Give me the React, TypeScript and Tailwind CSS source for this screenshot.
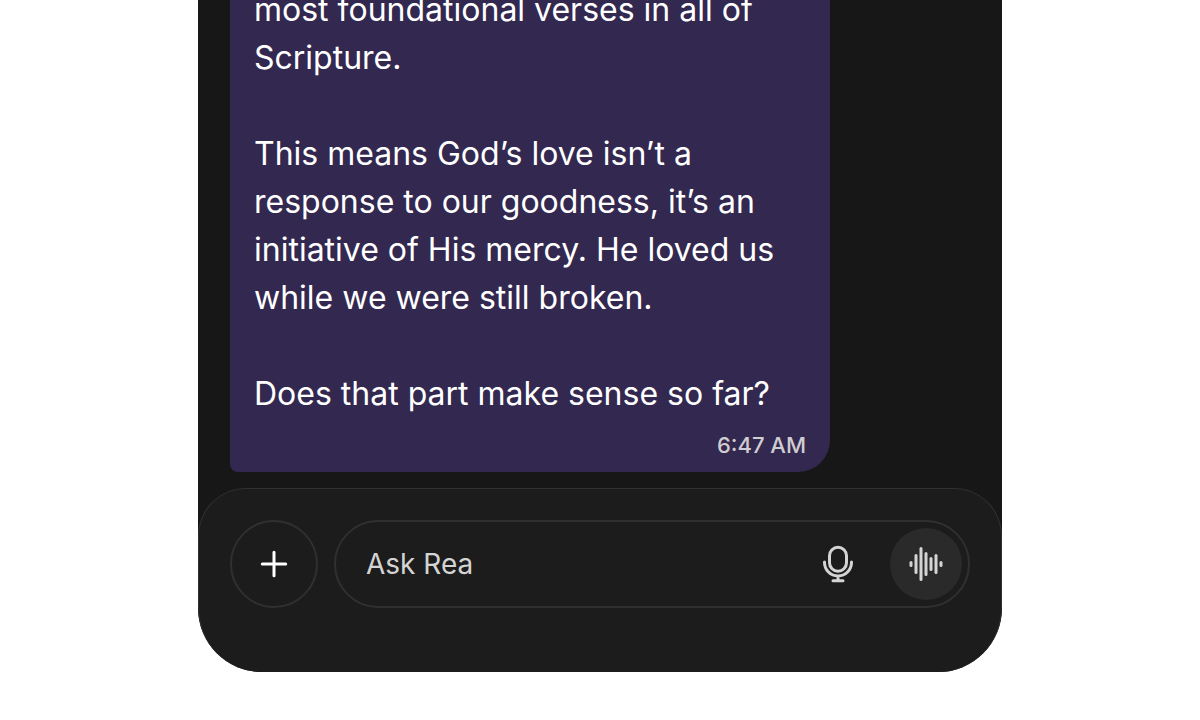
import type { ReactNode } from "react";

const waveBars = [3, 10, 17, 12, 7, 10, 3];

function PlusIcon() {
  return (
    <svg viewBox="0 0 32 32" className="size-8" fill="none" stroke="currentColor" strokeWidth="3" strokeLinecap="round" aria-hidden="true">
      <path d="M16 4.3v23.4M4.3 16h23.4" />
    </svg>
  );
}

function MicIcon() {
  return (
    <svg viewBox="0 0 40 40" className="size-10" fill="none" stroke="currentColor" strokeWidth="3" strokeLinecap="round" aria-hidden="true">
      <rect x="11.5" y="3.2" width="17" height="24" rx="8.5" />
      <path d="M6.5 18v.5a13.5 13.5 0 0 0 27 0V18M20 32v4.5M15 36.7h10" />
    </svg>
  );
}

function WaveIcon() {
  return (
    <svg viewBox="0 0 40 40" className="size-10" fill="currentColor" aria-hidden="true">
      {waveBars.map((half, i) => (
        <rect key={i} x={3.5 + i * 5} y={20 - half} width="3" height={half * 2} rx="1.5" />
      ))}
    </svg>
  );
}

function MessageBubble({ time, children }: { time: string; children: ReactNode }) {
  return (
    <article className="w-full max-w-[600px] rounded-t-[32px] rounded-br-[32px] rounded-bl-lg bg-[#33284f] px-6 pt-8 pb-3 text-white">
      <div className="space-y-12 text-[32px] leading-[48px]">{children}</div>
      <time className="mt-3 block text-right text-[22px] leading-[30px] font-medium text-[#d0cdd2]">
        {time}
      </time>
    </article>
  );
}

function Composer() {
  return (
    <form
      className="flex shrink-0 items-center gap-4 rounded-t-[48px] rounded-b-[64px] border border-b-0 border-[#303030] bg-[#1c1c1c] px-[31px] pt-[31px] pb-16"
      onSubmit={(e) => e.preventDefault()}
    >
      <button
        type="button"
        aria-label="Add attachment"
        className="flex size-[88px] shrink-0 items-center justify-center rounded-full border-2 border-[#303030] text-white"
      >
        <PlusIcon />
      </button>
      <div className="flex h-[88px] min-w-0 flex-1 items-center rounded-full border-2 border-[#303030] pr-1.5 pl-[30px] text-[#d4d4d4]">
        <input
          type="text"
          aria-label="Ask Rea"
          placeholder="Ask Rea"
          className="min-w-0 flex-1 bg-transparent text-[28px] leading-10 outline-none placeholder:text-[#d4d4d4]"
        />
        <button type="button" aria-label="Dictate" className="mr-8 shrink-0">
          <MicIcon />
        </button>
        <button
          type="button"
          aria-label="Start voice mode"
          className="flex size-[72px] shrink-0 items-center justify-center rounded-full bg-[#2a2a2a]"
        >
          <WaveIcon />
        </button>
      </div>
    </form>
  );
}

export default function App() {
  return (
    <div className="flex h-screen justify-center overflow-hidden bg-white pb-12 font-['Inter',sans-serif]">
      <main className="flex w-[67%] flex-col justify-end rounded-b-[64px] bg-[#171717]">
        <section className="px-8 pb-4">
          <MessageBubble time="6:47 AM">
            <p>
              most foundational verses in all of
              <br />
              Scripture.
            </p>
            <p>
              This means God’s love isn’t a
              <br />
              response to our goodness, it’s an
              <br />
              initiative of His mercy. He loved us
              <br />
              while we were still broken.
            </p>
            <p>Does that part make sense so far?</p>
          </MessageBubble>
        </section>
        <Composer />
      </main>
    </div>
  );
}
